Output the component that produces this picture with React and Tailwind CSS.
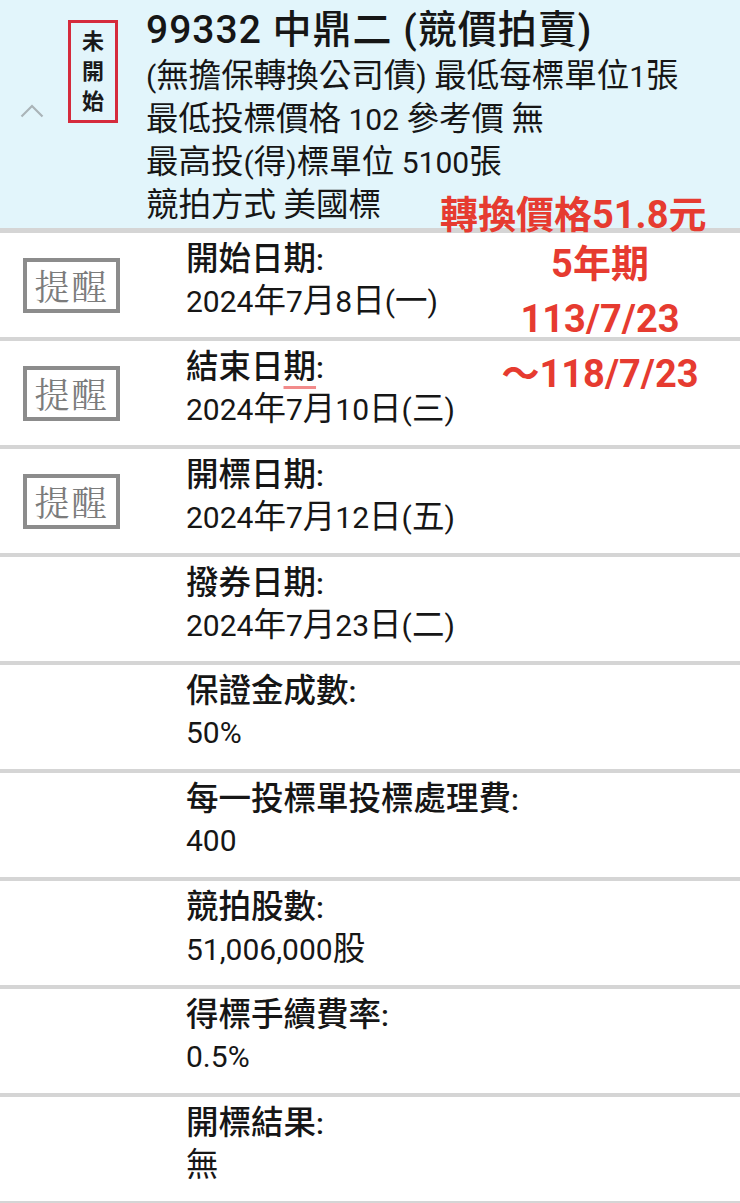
import React from 'react';

const CJK = /([\u2E80-\u9FFF\uF900-\uFAFF\uFF00-\uFFEF]+)/;

// latin runs stay at the parent size, CJK runs get the bigger face like on the phone
const Mix = ({ s }) =>
  s.split(CJK).map((part, i) =>
    i % 2 ? <span key={i} className="text-[32.5px]">{part}</span> : part
  );

const ROWS = [
  { label: '開始日期:', value: '2024年7月8日(一)', remind: true },
  { label: '結束日期:', value: '2024年7月10日(三)', remind: true, squiggle: true },
  { label: '開標日期:', value: '2024年7月12日(五)', remind: true },
  { label: '撥券日期:', value: '2024年7月23日(二)' },
  { label: '保證金成數:', value: '50%' },
  { label: '每一投標單投標處理費:', value: '400' },
  { label: '競拍股數:', value: '51,006,000股' },
  { label: '得標手續費率:', value: '0.5%' },
  { label: '開標結果:', value: '無' },
];

const FONT = "font-['Roboto','Noto_Sans_CJK_TC',sans-serif]";

const Remind = () => (
  <div className="ml-[23px] flex h-[55px] w-[97px] items-center justify-center border-[4px] border-[#8c8c8c] bg-white">
    <span className="font-['Noto_Serif_CJK_TC','Noto_Sans_CJK_TC',serif] text-[35px] leading-none tracking-[2px] text-[#7c7c7c]">提醒</span>
  </div>
);

function Row({ row }) {
  return (
    <div className="flex h-[108px] border-b-[4px] border-[#d5d5d5] bg-white">
      <div className="flex w-[186px] shrink-0 items-center">
        {row.remind && <Remind />}
      </div>
      <div className="whitespace-nowrap pt-[5px] text-[30px] text-[#161616]">
        <div className="h-[42px] leading-[42px] font-medium">
          {row.squiggle ? (
            <>
              <span className="text-[32.5px]">結束日</span>
              <span className="text-[32.5px] underline decoration-[#f28b8b] decoration-[3px] underline-offset-[8px]">期</span>:
            </>
          ) : (
            <Mix s={row.label} />
          )}
        </div>
        <div className="h-[42px] leading-[42px]">
          <Mix s={row.value} />
        </div>
      </div>
    </div>
  );
}

export default function App() {
  return (
    <div className={`relative h-[1203px] w-[740px] overflow-hidden bg-white ${FONT}`}>
      {/* header */}
      <div className="flex h-[233px] border-b-[5px] border-[#d5d5d5] bg-[#e2f5fb]">
        <div className="ml-[20px] mt-[104px] w-[24px] shrink-0">
          <svg width="24" height="14" viewBox="0 0 24 14" fill="none">
            <polyline points="1.5,12.5 12,2 22.5,12.5" stroke="#aab4b8" strokeWidth="2.2" />
          </svg>
        </div>
        <div className="ml-[24px] mt-[20px] flex h-[103px] w-[50px] shrink-0 flex-col items-center border-[3px] border-[#d52b3c] pt-[4px] text-[22px] font-bold leading-[30px] text-[#1a1a1a]">
          <span>未</span>
          <span>開</span>
          <span>始</span>
        </div>
        <div className="ml-[28px] pt-[7px] text-[30px] text-[#161616]">
          <div className="h-[46px] whitespace-nowrap text-[39px] font-medium leading-[46px] tracking-[1px]">
            99332 <span className="text-[39px]">中鼎二</span> (<span className="text-[39px]">競價拍賣</span>)
          </div>
          <div className="mt-[2px] whitespace-nowrap">
            <div className="h-[43px] leading-[43px]"><Mix s="(無擔保轉換公司債) 最低每標單位1張" /></div>
            <div className="h-[43px] leading-[43px]"><Mix s="最低投標價格 102 參考價 無" /></div>
            <div className="h-[43px] leading-[43px]"><Mix s="最高投(得)標單位 5100張" /></div>
            <div className="h-[43px] leading-[43px]"><Mix s="競拍方式 美國標" /></div>
          </div>
        </div>
      </div>

      {ROWS.map((row) => (
        <Row key={row.label} row={row} />
      ))}

      {/* red hand-written note laid over the list */}
      <div className="absolute left-[440px] top-[190px] whitespace-nowrap text-[38px] font-bold leading-[50px] text-[#e63b30]">
        轉換價格51.8元
      </div>
      <div className="absolute left-[500px] top-[237px] w-[200px] text-center text-[38px] font-bold leading-[55px] text-[#e63b30]">
        <div>5年期</div>
        <div>113/7/23</div>
        <div className="whitespace-nowrap">～118/7/23</div>
      </div>
    </div>
  );
}
